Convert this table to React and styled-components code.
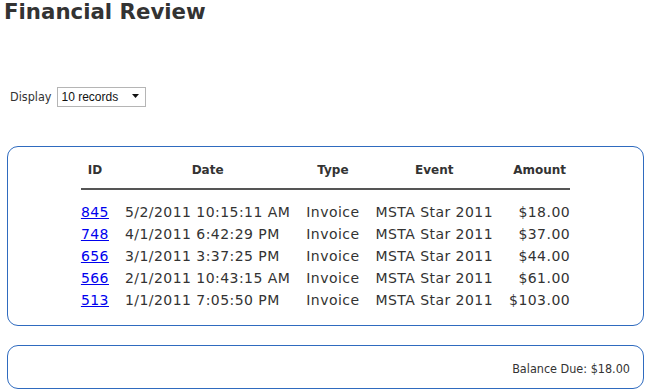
import React from "react";
import styled, { createGlobalStyle } from "styled-components";

const GlobalStyle = createGlobalStyle`
  html, body { margin: 0; padding: 0; background: #fff; }
  body { font-family: "DejaVu Sans", Verdana, sans-serif; color: #333; }
`;

const Page = styled.div`
  width: 637px;
  margin-left: 7px;
  display: flex;
  flex-direction: column;
`;

const Title = styled.h1`
  margin: 0 0 0 -3px;
  font-size: 21.3px;
  line-height: 24px;
  font-weight: bold;
  color: #333;
`;

const DisplayRow = styled.div`
  margin-top: 62px;
  display: flex;
  align-items: center;
  gap: 6px;
  padding-left: 3px;
  height: 20px;
`;

const Label = styled.label`
  font-family: "DejaVu Sans Condensed", Tahoma, sans-serif;
  font-size: 12.5px;
  color: #333;
`;

const SelectWrap = styled.div`
  position: relative;
  width: 89px;
  height: 20px;
`;

const Select = styled.select`
  appearance: none;
  -webkit-appearance: none;
  width: 100%;
  height: 100%;
  box-sizing: border-box;
  border: 1px solid #b5b5b5;
  border-radius: 0;
  background: #fff;
  padding: 0 0 0 3px;
  font-family: "Liberation Sans", Arial, sans-serif;
  font-size: 12px;
  color: #111;
  outline: none;
`;

const Arrow = styled.svg`
  position: absolute;
  right: 7px;
  top: 8px;
  pointer-events: none;
`;

const Box = styled.div`
  border: 1px solid #2f6bbf;
  border-radius: 11px;
  box-sizing: border-box;
`;

const RecordsBox = styled(Box)`
  margin-top: 40px;
  padding: 7px 0 14px;
  display: flex;
  justify-content: center;
`;

const Table = styled.table`
  border-collapse: collapse;
  font-size: 14px;
`;

const Th = styled.th`
  font-size: 12px;
  font-weight: bold;
  color: #333;
  line-height: 16px;
  padding: 8px 0 10px;
  text-align: center;
  border-bottom: 2px solid #555;
  & + & { padding-left: 16px; }
`;

const Td = styled.td`
  line-height: 22px;
  padding: 0;
  white-space: nowrap;
  color: #333;
  letter-spacing: 0.45px;
  text-align: ${(p) => (p.$right ? "right" : "left")};
  & + & { padding-left: 16px; }
  tr:first-child > & { padding-top: 11px; }
`;

const IdLink = styled.a`
  color: #0000ee;
  text-decoration: underline;
`;

const BalanceBox = styled(Box)`
  margin-top: 19px;
  height: 44px;
  display: flex;
  align-items: center;
  justify-content: flex-end;
  padding: 2px 13px 0 0;
  font-family: "DejaVu Sans Condensed", Tahoma, sans-serif;
  font-size: 12.5px;
  color: #333;
`;

const rows = [
  { id: "845", date: "5/2/2011 10:15:11 AM", amount: "$18.00" },
  { id: "748", date: "4/1/2011 6:42:29 PM", amount: "$37.00" },
  { id: "656", date: "3/1/2011 3:37:25 PM", amount: "$44.00" },
  { id: "566", date: "2/1/2011 10:43:15 AM", amount: "$61.00" },
  { id: "513", date: "1/1/2011 7:05:50 PM", amount: "$103.00" },
];

export default function App() {
  return (
    <>
      <GlobalStyle />
      <Page>
        <Title>Financial Review</Title>
        <DisplayRow>
          <Label>Display</Label>
          <SelectWrap>
            <Select defaultValue="10">
              <option value="10">10 records</option>
              <option value="25">25 records</option>
              <option value="50">50 records</option>
            </Select>
            <Arrow width="7" height="4" viewBox="0 0 7 4">
              <path d="M0 0 H7 L3.5 4 Z" fill="#111" />
            </Arrow>
          </SelectWrap>
        </DisplayRow>
        <RecordsBox>
          <Table>
            <thead>
              <tr>
                <Th>ID</Th>
                <Th>Date</Th>
                <Th>Type</Th>
                <Th>Event</Th>
                <Th>Amount</Th>
              </tr>
            </thead>
            <tbody>
              {rows.map((r) => (
                <tr key={r.id}>
                  <Td><IdLink href="#">{r.id}</IdLink></Td>
                  <Td>{r.date}</Td>
                  <Td>Invoice</Td>
                  <Td>MSTA Star 2011</Td>
                  <Td $right>{r.amount}</Td>
                </tr>
              ))}
            </tbody>
          </Table>
        </RecordsBox>
        <BalanceBox>Balance Due: $18.00</BalanceBox>
      </Page>
    </>
  );
}
